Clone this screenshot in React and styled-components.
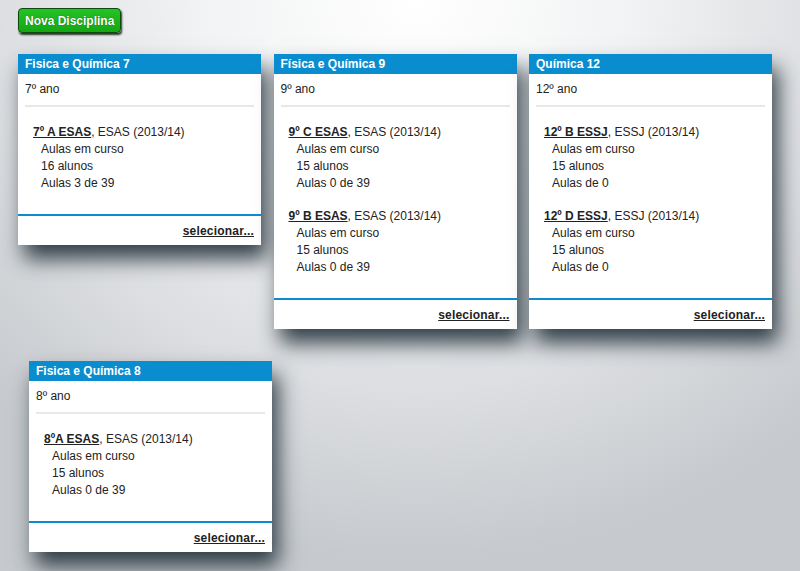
import React from "react";
import styled, { createGlobalStyle } from "styled-components";

const GlobalStyle = createGlobalStyle`
  html, body {
    margin: 0;
    padding: 0;
    height: 100%;
  }
  body {
    font-family: "Liberation Sans", Arial, sans-serif;
    font-size: 12px;
    color: #222;
  }
`;

const Page = styled.div`
  min-height: 100vh;
  display: flex;
  flex-direction: column;
  background: radial-gradient(
    ellipse 75% 95% at 52% 0%,
    #ffffff 0%,
    #f2f3f4 35%,
    #dcdee1 70%,
    #c6c9cd 100%
  );
`;

const Content = styled.main`
  flex: 1;
  padding: 8px 0 0 18px;
`;

const NewButton = styled.button`
  display: block;
  height: 25px;
  padding: 0 6px;
  border: 1px solid #0d4a0d;
  border-radius: 4px;
  background: linear-gradient(#25c225, #14a814);
  color: #fff;
  font-family: "Liberation Sans", Arial, sans-serif;
  font-weight: bold;
  font-size: 12px;
  text-shadow: 0 0 1px #0a4a0a;
  box-shadow: 1px 2px 2px rgba(0, 0, 0, 0.8);
  cursor: pointer;
  margin-bottom: 21px;
`;

const CardRow = styled.div`
  display: flex;
  gap: 12.5px;
  padding-left: ${p => p.$indent || 0}px;
  margin-bottom: 32px;
`;

const Card = styled.section`
  width: 243px;
  align-self: flex-start;
  background: #fff;
  box-shadow: 6px 14px 20px rgba(20, 35, 45, 0.85);
`;

const CardHeader = styled.header`
  height: 20px;
  line-height: 20px;
  padding-left: 7px;
  background: #0a8dcf;
  color: #fff;
  font-weight: bold;
  font-size: 12px;
`;

const Year = styled.div`
  padding: 7px 7px 0;
  line-height: 17px;
`;

const Separator = styled.hr`
  margin: 7px 7px 0;
  border: none;
  height: 2px;
  background: #e8e8e8;
`;

const ClassList = styled.ul`
  list-style: none;
  margin: 0;
  padding: 17px 7px 6px 15px;
`;

const ClassItem = styled.li`
  line-height: 17px;
  margin-bottom: 16px;
`;

const ClassLink = styled.a`
  font-weight: bold;
  color: #222;
  text-decoration: underline;
`;

const Detail = styled.div`
  padding-left: 8px;
`;

const CardFooter = styled.footer`
  border-top: 2px solid #0a8dcf;
  height: 29px;
  line-height: 30px;
  padding-right: 7px;
  text-align: right;
`;

const SelectLink = styled.a`
  font-weight: bold;
  color: #222;
  text-decoration: underline;
  letter-spacing: 0.2px;
`;

const BottomBar = styled.div`
  height: 4px;
  border-top: 1px solid #f4f4f4;
  background: #b3b3b3;
`;

const rows = [
  {
    indent: 0,
    cards: [
      {
        title: "Fisica e Química 7",
        year: "7º ano",
        classes: [
          { name: "7º A ESAS", school: "ESAS", students: 16, lessons: "Aulas 3 de 39" },
        ],
      },
      {
        title: "Física e Química 9",
        year: "9º ano",
        classes: [
          { name: "9º C ESAS", school: "ESAS", students: 15, lessons: "Aulas 0 de 39" },
          { name: "9º B ESAS", school: "ESAS", students: 15, lessons: "Aulas 0 de 39" },
        ],
      },
      {
        title: "Química 12",
        year: "12º ano",
        classes: [
          { name: "12º B ESSJ", school: "ESSJ", students: 15, lessons: "Aulas de 0" },
          { name: "12º D ESSJ", school: "ESSJ", students: 15, lessons: "Aulas de 0" },
        ],
      },
    ],
  },
  {
    indent: 11,
    cards: [
      {
        title: "Fisica e Química 8",
        year: "8º ano",
        classes: [
          { name: "8ºA ESAS", school: "ESAS", students: 15, lessons: "Aulas 0 de 39" },
        ],
      },
    ],
  },
];

function SubjectCard({ card }) {
  return (
    <Card>
      <CardHeader>{card.title}</CardHeader>
      <Year>{card.year}</Year>
      <Separator />
      <ClassList>
        {card.classes.map(c => (
          <ClassItem key={c.name}>
            <ClassLink href="#">{c.name}</ClassLink>, {c.school} (2013/14)
            <Detail>Aulas em curso</Detail>
            <Detail>{c.students} alunos</Detail>
            <Detail>{c.lessons}</Detail>
          </ClassItem>
        ))}
      </ClassList>
      <CardFooter>
        <SelectLink href="#">selecionar...</SelectLink>
      </CardFooter>
    </Card>
  );
}

export default function App() {
  return (
    <>
      <GlobalStyle />
      <Page>
        <Content>
          <NewButton>Nova Disciplina</NewButton>
          {rows.map((row, i) => (
            <CardRow key={i} $indent={row.indent}>
              {row.cards.map(card => (
                <SubjectCard key={card.title} card={card} />
              ))}
            </CardRow>
          ))}
        </Content>
        <BottomBar />
      </Page>
    </>
  );
}
